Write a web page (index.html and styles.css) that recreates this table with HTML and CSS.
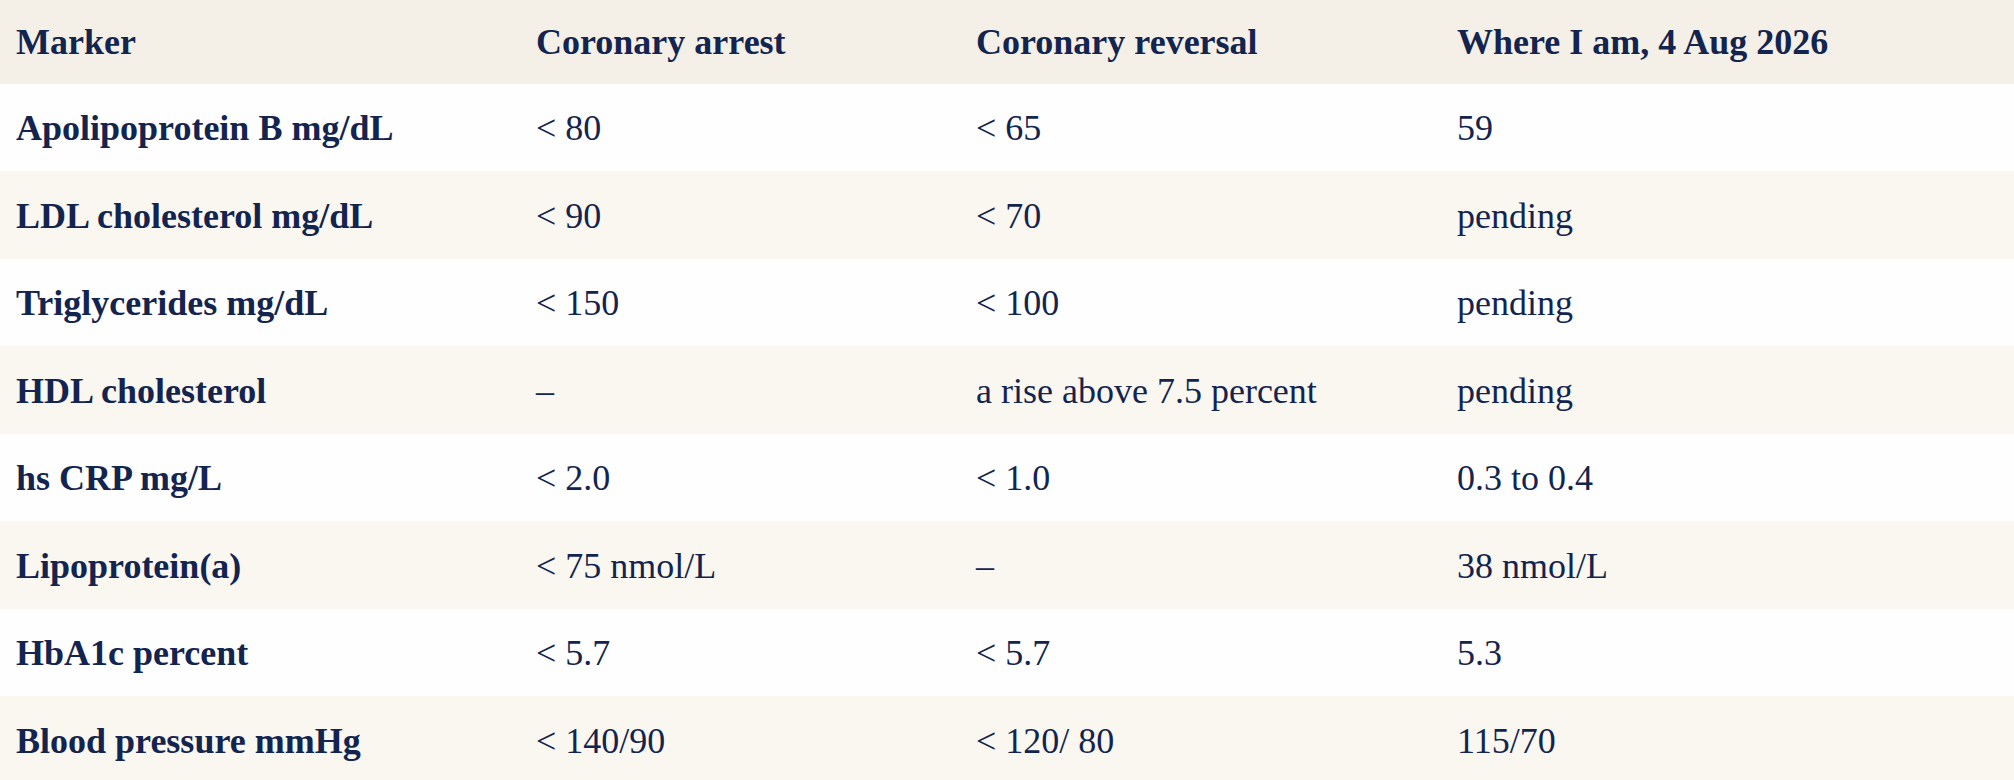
FILE: index.html
```html
<!DOCTYPE html>
<html lang="en">
<head>
<meta charset="utf-8">
<title>Markers</title>
<link rel="stylesheet" href="styles.css">
</head>
<body>
<table class="markers">
  <colgroup>
    <col class="c1"><col class="c2"><col class="c3"><col class="c4">
  </colgroup>
  <thead>
    <tr class="head">
      <th>Marker</th>
      <th>Coronary arrest</th>
      <th>Coronary reversal</th>
      <th>Where I am, 4 Aug 2026</th>
    </tr>
  </thead>
  <tbody>
    <tr><th>Apolipoprotein B mg/dL</th><td>&lt; 80</td><td>&lt; 65</td><td>59</td></tr>
    <tr><th>LDL cholesterol mg/dL</th><td>&lt; 90</td><td>&lt; 70</td><td>pending</td></tr>
    <tr><th>Triglycerides mg/dL</th><td>&lt; 150</td><td>&lt; 100</td><td>pending</td></tr>
    <tr><th>HDL cholesterol</th><td>–</td><td>a rise above 7.5 percent</td><td>pending</td></tr>
    <tr><th>hs CRP mg/L</th><td>&lt; 2.0</td><td>&lt; 1.0</td><td>0.3 to 0.4</td></tr>
    <tr><th>Lipoprotein(a)</th><td>&lt; 75 nmol/L</td><td>–</td><td>38 nmol/L</td></tr>
    <tr><th>HbA1c percent</th><td>&lt; 5.7</td><td>&lt; 5.7</td><td>5.3</td></tr>
    <tr><th>Blood pressure mmHg</th><td>&lt; 140/90</td><td>&lt; 120/ 80</td><td>115/70</td></tr>
  </tbody>
</table>
</body>
</html>
```

FILE: styles.css
```css
html, body {
  margin: 0;
  padding: 0;
  background: #ffffff;
}

body {
  font-family: "Liberation Serif", "Times New Roman", serif;
  font-size: 36px;
  color: #13254f;
}

.markers {
  width: 2014px;
  border-collapse: collapse;
  table-layout: fixed;
}

.c1 { width: 520px; }
.c2 { width: 440px; }
.c3 { width: 481px; }
.c4 { width: 573px; }

.markers th,
.markers td {
  padding: 0 16px;
  text-align: left;
  vertical-align: middle;
  line-height: 41px;
  white-space: nowrap;
}

.markers th {
  font-weight: bold;
}

.markers td {
  font-weight: normal;
}

.head {
  height: 83.5px;
  background: #f4f0e7;
}

.head th {
  padding-top: 2px;
}

.markers tbody tr {
  height: 87.5px;
  background: #fefefe;
}

.markers tbody tr:nth-child(even) {
  background: #faf7f0;
}

.markers tbody th,
.markers tbody td {
  padding-top: 3px;
}
```
